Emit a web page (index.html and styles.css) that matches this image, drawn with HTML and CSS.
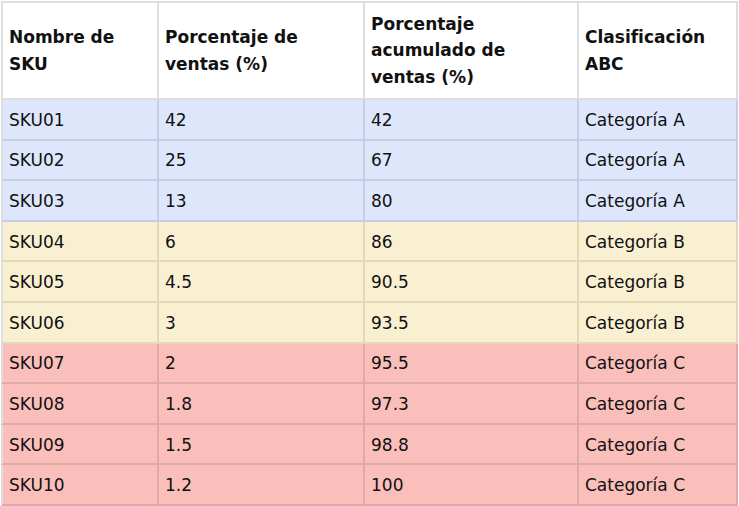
FILE: index.html
```html
<!DOCTYPE html>
<html lang="es">
<head>
<meta charset="utf-8">
<title>Clasificación ABC</title>
<link rel="stylesheet" href="styles.css">
</head>
<body>
<table class="abc">
  <colgroup>
    <col class="c1"><col class="c2"><col class="c3"><col class="c4">
  </colgroup>
  <thead>
    <tr>
      <th>Nombre de<br>SKU</th>
      <th>Porcentaje de<br>ventas (%)</th>
      <th>Porcentaje<br>acumulado de<br>ventas (%)</th>
      <th>Clasificación<br>ABC</th>
    </tr>
  </thead>
  <tbody>
    <tr class="cat-a"><td>SKU01</td><td>42</td><td>42</td><td>Categoría A</td></tr>
    <tr class="cat-a"><td>SKU02</td><td>25</td><td>67</td><td>Categoría A</td></tr>
    <tr class="cat-a"><td>SKU03</td><td>13</td><td>80</td><td>Categoría A</td></tr>
    <tr class="cat-b"><td>SKU04</td><td>6</td><td>86</td><td>Categoría B</td></tr>
    <tr class="cat-b"><td>SKU05</td><td>4.5</td><td>90.5</td><td>Categoría B</td></tr>
    <tr class="cat-b"><td>SKU06</td><td>3</td><td>93.5</td><td>Categoría B</td></tr>
    <tr class="cat-c"><td>SKU07</td><td>2</td><td>95.5</td><td>Categoría C</td></tr>
    <tr class="cat-c"><td>SKU08</td><td>1.8</td><td>97.3</td><td>Categoría C</td></tr>
    <tr class="cat-c"><td>SKU09</td><td>1.5</td><td>98.8</td><td>Categoría C</td></tr>
    <tr class="cat-c"><td>SKU10</td><td>1.2</td><td>100</td><td>Categoría C</td></tr>
  </tbody>
</table>
</body>
</html>
```

FILE: styles.css
```css
html, body {
  margin: 0;
  padding: 0;
  background: #ffffff;
}

body {
  padding: 1px 0 0 1px;
  font-family: "DejaVu Sans", Verdana, sans-serif;
  font-size: 17px;
  color: #111111;
}

.abc {
  border-collapse: separate;
  border-spacing: 0;
  table-layout: fixed;
  width: 737px;
}

.c1 { width: 158px; }
.c2 { width: 206px; }
.c3 { width: 214px; }
.c4 { width: 159px; }

.abc th,
.abc td {
  box-sizing: border-box;
  text-align: left;
  vertical-align: middle;
  padding: 0 6px;
  border-right: 2px solid #dedede;
  border-bottom: 2px solid #dedede;
}

.abc th:first-child,
.abc td:first-child {
  border-left: 2px solid #dedede;
}

.abc th {
  border-top: 2px solid #dedede;
  font-weight: bold;
  line-height: 26.5px;
  height: 99px;
  background: #ffffff;
}

.abc td {
  height: 40.6px;
  line-height: 20px;
  padding-top: 1px;
}

.cat-a td {
  background: #dee6fb;
  border-color: #c5cee4;
}

.cat-b td {
  background: #f9f0d2;
  border-color: #e4d9b6;
}

.cat-c td {
  background: #fbbfbb;
  border-color: #dfaaa7;
}
```
